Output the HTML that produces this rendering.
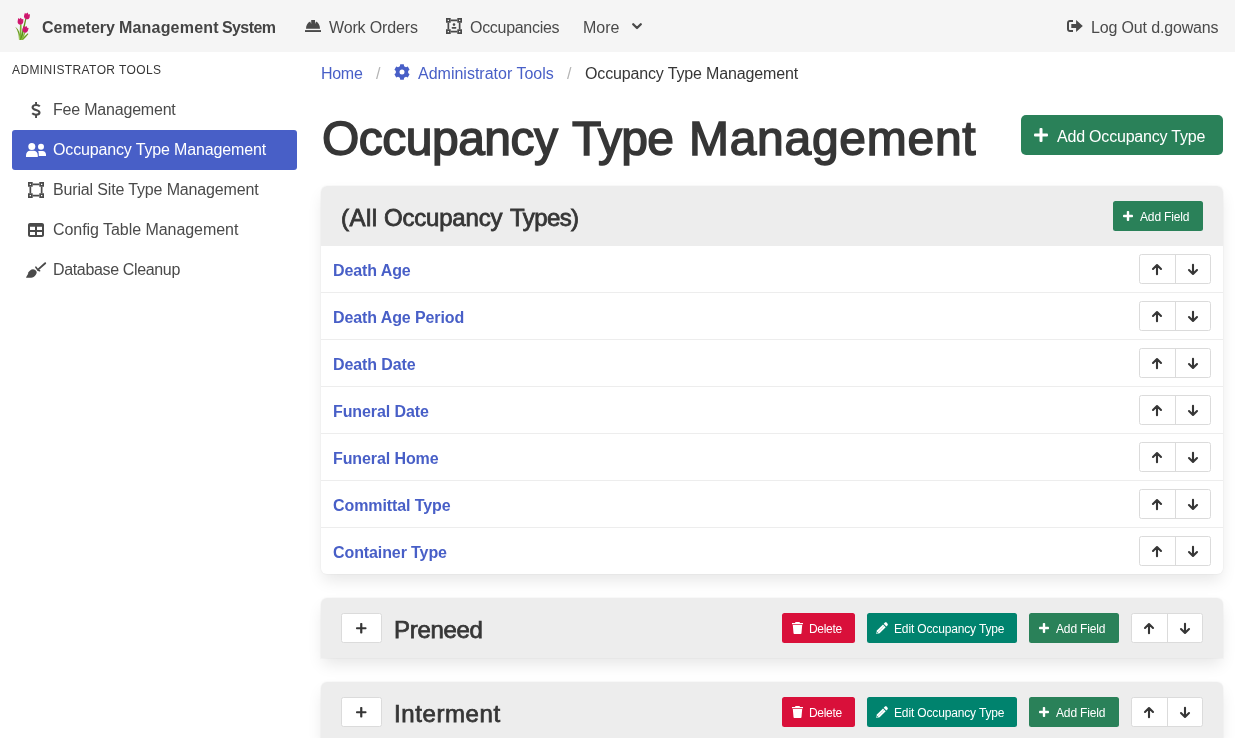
<!DOCTYPE html>
<html><head><meta charset="utf-8">
<style>
*{box-sizing:border-box;margin:0;padding:0}
html,body{width:1235px;height:738px;overflow:hidden;background:#fff}
body{position:relative;font-family:"Liberation Sans",sans-serif;color:#4a4a4a;font-size:16px}
.a{position:absolute;white-space:nowrap;line-height:1;will-change:transform}
svg{position:absolute;display:block;overflow:visible}
#nav{position:absolute;left:0;top:0;width:1235px;height:52px;background:#f5f5f5}
.nt{color:#4a4a4a;font-size:16px}
.ml{font-size:12px;letter-spacing:0.4px;color:#363636}
.mi{font-size:16px;color:#4a4a4a}
.active{position:absolute;left:12px;top:130px;width:285px;height:40px;background:#485fc7;border-radius:3px}
.link{color:#485fc7}
.panel{position:absolute;left:321px;width:902px;border-radius:6px;background:#fff;
 box-shadow:0 0.5em 1em -0.125em rgba(10,10,10,.1),0 0 0 1px rgba(10,10,10,.02)}
.ph{position:absolute;left:0;top:0;width:902px;height:60px;background:#ededed;border-radius:6px 6px 0 0}
.row{position:absolute;left:0;width:902px;height:47px;border-bottom:1px solid #ededed}
.rt{font-weight:700;color:#485fc7;font-size:16px}
.btn{position:absolute;border-radius:2.5px}
.green{background:#2a8159}
.grp{position:absolute;width:72px;height:30px;border:1px solid #dbdbdb;border-radius:2.5px;background:#fff}
.grp:after{content:"";position:absolute;left:35px;top:0;width:1px;height:28px;background:#dbdbdb}
.wt{color:#fff}
.sb{-webkit-text-stroke:0.6px currentColor}
</style></head>
<body>
<div id="nav"></div>

<svg style="left:15px;top:12px" width="16" height="28" viewBox="0 0 16 28">
<path d="M0.2 14.8C1.8 17 3 20 3.6 23L4 28H6L4.8 22C4 18.5 2.2 16 0.2 14.8Z" fill="#6a9c1e"/>
<path d="M4.4 28L5 12.5H6.6L6.4 28Z" fill="#7bb02e"/>
<path d="M5 28L10.3 6.5L11.4 6.8L7 28Z" fill="#5d9218"/>
<path d="M6 28C7.6 26 10.3 23.6 12.8 21.3L13.4 22C11.6 24.2 9.8 26.3 8 28Z" fill="#6a9c1e"/>
<path d="M5.6 28L9.6 19.8L10.6 20.3L7.6 28Z" fill="#84b83a"/>
<path d="M3.6 20.5C4.2 23 4.8 25.5 5.2 28H4.4C4.2 25.5 3.8 23 3.6 20.5Z" fill="#b4d97a"/>
<g fill="#d0186f">
<path d="M9 1.4L10.3 2.2 11.6 0.4 12.8 2 14.3 1.3 14.9 4.5C14.9 6.4 13.4 7.4 11.8 7.2 10.2 7 9 5.7 9 4Z" transform="rotate(18 11.8 4)"/>
<path d="M2.8 6.4L4.1 7.2 5.4 5.8 6.6 7.2 8 6.6 8.4 9.7C8.4 11.6 6.9 12.8 5.5 12.7 3.8 12.6 2.6 11.2 2.7 9.6Z" transform="rotate(8 5.5 9)"/>
<path d="M7.6 14.6L9 15.4 10.3 13.8 11.6 15.3 13 14.8 13.4 17.8C13.4 19.7 12 20.9 10.5 20.8 8.9 20.7 7.6 19.4 7.7 17.7Z" transform="rotate(22 10.5 17)"/>
</g>
<g fill="#a50c50" opacity="0.45"><path d="M11 3.5L12 6.5" stroke="#a50c50" stroke-width="0.6"/><path d="M5 8.5L5.6 11.5" stroke="#a50c50" stroke-width="0.6"/><path d="M10 16.5L10.8 19.5" stroke="#a50c50" stroke-width="0.6"/></g>
</svg>
<div class="a" style="left:41.6px;top:20px;font-weight:700;color:#444;font-size:16px;">Cemetery</div>
<div class="a" style="left:118.5px;top:20px;font-weight:700;color:#444;font-size:16px;letter-spacing:0.19px">Management</div>
<div class="a" style="left:222.2px;top:20px;font-weight:700;color:#444;font-size:16px;letter-spacing:-0.6px">System</div>
<svg style="left:305px;top:20px" width="16" height="12" viewBox="0 0 16 12" fill="#4a4a4a"><path d="M1 8.8C1 5.2 2.7 2.6 5.2 1.5L6.2 3.9V0H10V3.9L11 1.5C13.4 2.6 15 5.2 15 8.8Z"/><rect x="0" y="10.1" width="16" height="1.9"/></svg>
<div class="a nt" style="left:329px;top:20px;letter-spacing:-0.15px">Work Orders</div>
<svg style="left:446px;top:18px" width="16" height="16" viewBox="0 0 16 16" fill="#4a4a4a"><path fill-rule="evenodd" d="M0 0h4.7v4.7h-4.7z M1.7 1.7v1.3h1.3v-1.3z M11.3 0h4.7v4.7h-4.7z M13.0 1.7v1.3h1.3v-1.3z M0 11.3h4.7v4.7h-4.7z M1.7 13.0v1.3h1.3v-1.3z M11.3 11.3h4.7v4.7h-4.7z M13.0 13.0v1.3h1.3v-1.3z "/><path d="M4.7 1.5h6.6v1.7h-6.6z M4.7 12.8h6.6v1.7h-6.6z M1.5 4.7h1.7v6.6h-1.7z M12.8 4.7h1.7v6.6h-1.7z"/><circle cx="8" cy="6.6" r="1.3"/><rect x="5.6" y="8.9" width="4.8" height="1.8" rx="0.8"/></svg>
<div class="a nt" style="left:470px;top:20px;letter-spacing:-0.3px">Occupancies</div>
<div class="a nt" style="left:583.2px;top:20px">More</div>
<svg style="left:632px;top:22.5px" width="10" height="7" viewBox="0 0 10 7" fill="none" stroke="#4a4a4a" stroke-width="2.3" stroke-linecap="round" stroke-linejoin="round"><path d="M1.2 1.2L5 5 8.8 1.2"/></svg>
<svg style="left:1067px;top:20px" width="16" height="12" viewBox="0 0 16 12" fill="#4a4a4a"><path d="M6 0H3C1.3 0 0 1.3 0 3V9C0 10.7 1.3 12 3 12H6V10H3C2.4 10 2 9.6 2 9V3C2 2.4 2.4 2 3 2H6Z"/><path d="M4.3 3.9H9.1V0L15.8 6L9.1 12V7.9H4.3Z"/></svg>
<div class="a nt" style="left:1091px;top:20px;letter-spacing:-0.15px">Log Out d.gowans</div>
<div class="a ml" style="left:12px;top:64px">ADMINISTRATOR TOOLS</div>
<div class="active"></div>
<svg style="left:31px;top:102px" width="10" height="16" viewBox="0 0 10 16"><rect x="4.1" y="0" width="1.9" height="3" fill="#4a4a4a"/><rect x="4.1" y="13" width="1.9" height="3" fill="#4a4a4a"/><path d="M8.8 4.4C8 3.5 6.8 3.05 5.2 3.05 3.2 3.05 1.6 4 1.6 5.5 1.6 8.6 8.5 7.5 8.5 10.5 8.5 11.9 7 12.7 5 12.7 3.5 12.7 2.2 12.2 1.2 11.3" fill="none" stroke="#4a4a4a" stroke-width="2.1"/></svg>
<div class="a mi" style="left:53px;top:102px;letter-spacing:-0.2px">Fee Management</div>
<svg style="left:26px;top:143px" width="20" height="14" viewBox="0 0 20 14" fill="#fff"><circle cx="5.8" cy="3.5" r="3.5"/><path d="M0 12.5C0 9.8 1.8 7.8 4.2 7.8H7.6C10 7.8 11.8 9.8 11.8 12.5V14H0Z"/><circle cx="15" cy="3.8" r="3"/><path d="M12.2 8H16.6C18.5 8 20 9.6 20 11.6V13H12.8V12.5C12.8 10.6 12.7 9.2 12.2 8Z"/></svg>
<div class="a mi" style="left:53px;top:142px;color:#fff;letter-spacing:-0.15px">Occupancy Type Management</div>
<svg style="left:28px;top:182px" width="16" height="16" viewBox="0 0 16 16" fill="#4a4a4a"><path fill-rule="evenodd" d="M0 0h4.7v4.7h-4.7z M1.7 1.7v1.3h1.3v-1.3z M11.3 0h4.7v4.7h-4.7z M13.0 1.7v1.3h1.3v-1.3z M0 11.3h4.7v4.7h-4.7z M1.7 13.0v1.3h1.3v-1.3z M11.3 11.3h4.7v4.7h-4.7z M13.0 13.0v1.3h1.3v-1.3z "/><path d="M4.7 1.5h6.6v1.7h-6.6z M4.7 12.8h6.6v1.7h-6.6z M1.5 4.7h1.7v6.6h-1.7z M12.8 4.7h1.7v6.6h-1.7z"/></svg>
<div class="a mi" style="left:53px;top:182px;letter-spacing:-0.15px">Burial Site Type Management</div>
<svg style="left:28px;top:223px" width="16" height="14" viewBox="0 0 16 14" fill="#4a4a4a"><path fill-rule="evenodd" d="M2 0H14C15.1 0 16 .9 16 2V12C16 13.1 15.1 14 14 14H2C.9 14 0 13.1 0 12V2C0 .9.9 0 2 0ZM2 3.8V6.9H7V3.8ZM9 3.8V6.9H14V3.8ZM2 9V12H7V9ZM9 9V12H14V9Z"/></svg>
<div class="a mi" style="left:53px;top:222px;letter-spacing:-0.05px">Config Table Management</div>
<svg style="left:26px;top:262px" width="20" height="16" viewBox="0 0 20 16"><path d="M19.2 1.2L12 7.6" stroke="#4a4a4a" stroke-width="1.9" stroke-linecap="round"/><path d="M9.9 5.2L11.8 7.9 13.6 8.7" fill="none" stroke="#4a4a4a" stroke-width="1.6" stroke-linecap="round" stroke-linejoin="round"/><path d="M0 15.7C0.9 13.6 1.7 12.4 2.4 11.7L1.8 11.2C3 9.1 5 7.4 7 7.3 8.5 7.3 10 8.4 10.7 10 10.7 12 9.4 14 7.6 14.9 5.5 15.8 2.5 16 0 15.7Z" fill="#4a4a4a"/></svg>
<div class="a mi" style="left:53px;top:262px;letter-spacing:-0.35px">Database Cleanup</div>
<div class="a link" style="left:321px;top:66px;letter-spacing:-0.3px">Home</div>
<div class="a" style="left:376px;top:66px;color:#b5b5b5">/</div>
<svg style="left:394px;top:64px" width="16" height="16" viewBox="0 0 16 16" fill="#485fc7"><path fill-rule="evenodd" d="M4.90 2.63 L5.88 2.17 L6.22 0.30 L9.78 0.30 L10.12 2.17 L11.10 2.63 L11.99 3.25 L13.78 2.61 L15.55 5.69 L14.11 6.92 L14.20 8.00 L14.11 9.08 L15.55 10.31 L13.78 13.39 L11.99 12.75 L11.10 13.37 L10.12 13.83 L9.78 15.70 L6.22 15.70 L5.88 13.83 L4.90 13.37 L4.01 12.75 L2.22 13.39 L0.45 10.31 L1.89 9.08 L1.80 8.00 L1.89 6.92 L0.45 5.69 L2.22 2.61 L4.01 3.25Z M8 5.5A2.5 2.5 0 1 0 8 10.5 2.5 2.5 0 1 0 8 5.5Z"/></svg>
<div class="a link" style="left:418px;top:66px">Administrator Tools</div>
<div class="a" style="left:567px;top:66px;color:#b5b5b5">/</div>
<div class="a" style="left:585px;top:66px;color:#363636;letter-spacing:-0.15px">Occupancy Type Management</div>
<div class="a" style="left:321.6px;top:115px;font-size:48px;color:#363636;-webkit-text-stroke:1.5px #363636;letter-spacing:-0.52px">Occupancy</div>
<div class="a" style="left:572.4px;top:115px;font-size:48px;color:#363636;-webkit-text-stroke:1.5px #363636;letter-spacing:-0.67px">Type</div>
<div class="a" style="left:688.8px;top:115px;font-size:48px;color:#363636;-webkit-text-stroke:1.5px #363636;letter-spacing:0.72px">Management</div>
<div class="btn green" style="left:1021px;top:115px;width:202px;height:40px;border-radius:5px"></div>
<svg style="left:1034px;top:128px" width="14" height="14" viewBox="0 0 14 14" fill="#fff"><rect x="5.50" y="0" width="3.00" height="14" rx="1.00"/><rect x="0" y="5.50" width="14" height="3.00" rx="1.00"/></svg>
<div class="a wt" style="left:1057px;top:129px;letter-spacing:-0.2px">Add Occupancy Type</div>
<div class="panel" style="top:186px;height:388px">
<div class="ph"></div>
<div class="row" style="top:60px;"></div>
<div class="row" style="top:107px;"></div>
<div class="row" style="top:154px;"></div>
<div class="row" style="top:201px;"></div>
<div class="row" style="top:248px;"></div>
<div class="row" style="top:295px;"></div>
<div class="row" style="top:342px;border-bottom:none"></div>
</div>
<div class="a" style="left:341px;top:206px;font-size:24px;color:#363636;-webkit-text-stroke:0.8px #363636;letter-spacing:0.5px">(All</div>
<div class="a" style="left:383.8px;top:206px;font-size:24px;color:#363636;-webkit-text-stroke:0.8px #363636;letter-spacing:-0.2px">Occupancy</div>
<div class="a" style="left:510.3px;top:206px;font-size:24px;color:#363636;-webkit-text-stroke:0.8px #363636;letter-spacing:-0.6px">Types)</div>
<div class="btn green" style="left:1113px;top:201px;width:90px;height:30px"></div>
<svg style="left:1123px;top:211px" width="10" height="10" viewBox="0 0 10 10" fill="#fff"><rect x="3.80" y="0" width="2.40" height="10" rx="0.80"/><rect x="0" y="3.80" width="10" height="2.40" rx="0.80"/></svg>
<div class="a wt" style="left:1140px;top:211px;font-size:12px;letter-spacing:-0.15px">Add Field</div>
<div class="a rt" style="left:333px;top:263px;letter-spacing:-0.1px">Death Age</div>
<div class="grp" style="left:1139px;top:254px"></div><svg style="left:1152px;top:263.5px" width="10" height="11" viewBox="0 0 10 11" fill="none" stroke="#363636" stroke-width="2.1" stroke-linecap="round" stroke-linejoin="round"><path d="M5 10.2V1.2M1 5l4-4 4 4"/></svg><svg style="left:1188px;top:263.5px" width="10" height="11" viewBox="0 0 10 11" fill="none" stroke="#363636" stroke-width="2.1" stroke-linecap="round" stroke-linejoin="round"><path d="M5 0.8V9.8M1 6l4 4 4-4"/></svg>
<div class="a rt" style="left:333px;top:310px;letter-spacing:-0.1px">Death Age Period</div>
<div class="grp" style="left:1139px;top:301px"></div><svg style="left:1152px;top:310.5px" width="10" height="11" viewBox="0 0 10 11" fill="none" stroke="#363636" stroke-width="2.1" stroke-linecap="round" stroke-linejoin="round"><path d="M5 10.2V1.2M1 5l4-4 4 4"/></svg><svg style="left:1188px;top:310.5px" width="10" height="11" viewBox="0 0 10 11" fill="none" stroke="#363636" stroke-width="2.1" stroke-linecap="round" stroke-linejoin="round"><path d="M5 0.8V9.8M1 6l4 4 4-4"/></svg>
<div class="a rt" style="left:333px;top:357px;letter-spacing:-0.1px">Death Date</div>
<div class="grp" style="left:1139px;top:348px"></div><svg style="left:1152px;top:357.5px" width="10" height="11" viewBox="0 0 10 11" fill="none" stroke="#363636" stroke-width="2.1" stroke-linecap="round" stroke-linejoin="round"><path d="M5 10.2V1.2M1 5l4-4 4 4"/></svg><svg style="left:1188px;top:357.5px" width="10" height="11" viewBox="0 0 10 11" fill="none" stroke="#363636" stroke-width="2.1" stroke-linecap="round" stroke-linejoin="round"><path d="M5 0.8V9.8M1 6l4 4 4-4"/></svg>
<div class="a rt" style="left:333px;top:404px;letter-spacing:-0.1px">Funeral Date</div>
<div class="grp" style="left:1139px;top:395px"></div><svg style="left:1152px;top:404.5px" width="10" height="11" viewBox="0 0 10 11" fill="none" stroke="#363636" stroke-width="2.1" stroke-linecap="round" stroke-linejoin="round"><path d="M5 10.2V1.2M1 5l4-4 4 4"/></svg><svg style="left:1188px;top:404.5px" width="10" height="11" viewBox="0 0 10 11" fill="none" stroke="#363636" stroke-width="2.1" stroke-linecap="round" stroke-linejoin="round"><path d="M5 0.8V9.8M1 6l4 4 4-4"/></svg>
<div class="a rt" style="left:333px;top:451px;letter-spacing:-0.1px">Funeral Home</div>
<div class="grp" style="left:1139px;top:442px"></div><svg style="left:1152px;top:451.5px" width="10" height="11" viewBox="0 0 10 11" fill="none" stroke="#363636" stroke-width="2.1" stroke-linecap="round" stroke-linejoin="round"><path d="M5 10.2V1.2M1 5l4-4 4 4"/></svg><svg style="left:1188px;top:451.5px" width="10" height="11" viewBox="0 0 10 11" fill="none" stroke="#363636" stroke-width="2.1" stroke-linecap="round" stroke-linejoin="round"><path d="M5 0.8V9.8M1 6l4 4 4-4"/></svg>
<div class="a rt" style="left:333px;top:498px;letter-spacing:-0.1px">Committal Type</div>
<div class="grp" style="left:1139px;top:489px"></div><svg style="left:1152px;top:498.5px" width="10" height="11" viewBox="0 0 10 11" fill="none" stroke="#363636" stroke-width="2.1" stroke-linecap="round" stroke-linejoin="round"><path d="M5 10.2V1.2M1 5l4-4 4 4"/></svg><svg style="left:1188px;top:498.5px" width="10" height="11" viewBox="0 0 10 11" fill="none" stroke="#363636" stroke-width="2.1" stroke-linecap="round" stroke-linejoin="round"><path d="M5 0.8V9.8M1 6l4 4 4-4"/></svg>
<div class="a rt" style="left:333px;top:545px;letter-spacing:-0.1px">Container Type</div>
<div class="grp" style="left:1139px;top:536px"></div><svg style="left:1152px;top:545.5px" width="10" height="11" viewBox="0 0 10 11" fill="none" stroke="#363636" stroke-width="2.1" stroke-linecap="round" stroke-linejoin="round"><path d="M5 10.2V1.2M1 5l4-4 4 4"/></svg><svg style="left:1188px;top:545.5px" width="10" height="11" viewBox="0 0 10 11" fill="none" stroke="#363636" stroke-width="2.1" stroke-linecap="round" stroke-linejoin="round"><path d="M5 0.8V9.8M1 6l4 4 4-4"/></svg>
<div class="panel" style="top:598px;height:60px;background:#ededed;border-radius:6px 6px 0 0"></div>
<div class="btn" style="left:341px;top:613px;width:41px;height:30px;background:#fff;border:1px solid #dbdbdb"></div>
<svg style="left:356.3px;top:622.5px" width="10.5" height="10.5" viewBox="0 0 10.5 10.5" fill="#363636"><rect x="4.15" y="0" width="2.20" height="10.5" rx="0.73"/><rect x="0" y="4.15" width="10.5" height="2.20" rx="0.73"/></svg>
<div class="a sb" style="left:394px;top:618px;font-size:24px;color:#363636;-webkit-text-stroke:0.75px #363636;letter-spacing:-0.3px">Preneed</div>
<div class="btn" style="left:782px;top:613px;width:73px;height:30px;background:#d9103a"></div>
<svg style="left:792px;top:622px" width="11" height="12" viewBox="0 0 11 12" fill="#fff"><path d="M3.5 0H7.5L8 1H11V2.3H0V1H3Z"/><path d="M0.8 3H10.2L9.5 11C9.45 11.6 9 12 8.4 12H2.6C2 12 1.55 11.6 1.5 11Z"/></svg>
<div class="a wt" style="left:809px;top:623px;font-size:12px;letter-spacing:-0.3px">Delete</div>
<div class="btn" style="left:867px;top:613px;width:150px;height:30px;background:#00836e"></div>
<svg style="left:876px;top:622px" width="13" height="12" viewBox="0 0 13 12" fill="#fff"><path d="M8.7 0.8C9.3 0.2 10.2 0.2 10.8 0.8L11.4 1.4C12 2 12 2.9 11.4 3.5L10.4 4.5 7.7 1.8Z"/><path d="M7 2.5L9.7 5.2 3.6 11.3 0.2 12 0.9 8.6Z"/><path d="M2.6 9.6L8 4.2" stroke="#00836e" stroke-width="0.55" stroke-dasharray="0.7 0.7"/><path d="M0.7 11.5L1.1 9.9 2.3 11.1Z" fill="#00836e"/></svg>
<div class="a wt" style="left:894px;top:623px;font-size:12px;letter-spacing:-0.15px">Edit Occupancy Type</div>
<div class="btn green" style="left:1029px;top:613px;width:90px;height:30px"></div>
<svg style="left:1039px;top:623px" width="10" height="10" viewBox="0 0 10 10" fill="#fff"><rect x="3.80" y="0" width="2.40" height="10" rx="0.80"/><rect x="0" y="3.80" width="10" height="2.40" rx="0.80"/></svg>
<div class="a wt" style="left:1056px;top:623px;font-size:12px;letter-spacing:-0.15px">Add Field</div>
<div class="grp" style="left:1131px;top:613px"></div><svg style="left:1144px;top:622.5px" width="10" height="11" viewBox="0 0 10 11" fill="none" stroke="#363636" stroke-width="2.1" stroke-linecap="round" stroke-linejoin="round"><path d="M5 10.2V1.2M1 5l4-4 4 4"/></svg><svg style="left:1180px;top:622.5px" width="10" height="11" viewBox="0 0 10 11" fill="none" stroke="#363636" stroke-width="2.1" stroke-linecap="round" stroke-linejoin="round"><path d="M5 0.8V9.8M1 6l4 4 4-4"/></svg>
<div class="panel" style="top:682px;height:60px;background:#ededed;border-radius:6px 6px 0 0"></div>
<div class="btn" style="left:341px;top:697px;width:41px;height:30px;background:#fff;border:1px solid #dbdbdb"></div>
<svg style="left:356.3px;top:706.5px" width="10.5" height="10.5" viewBox="0 0 10.5 10.5" fill="#363636"><rect x="4.15" y="0" width="2.20" height="10.5" rx="0.73"/><rect x="0" y="4.15" width="10.5" height="2.20" rx="0.73"/></svg>
<div class="a sb" style="left:394px;top:702px;font-size:24px;color:#363636;-webkit-text-stroke:0.75px #363636;letter-spacing:0.6px">Interment</div>
<div class="btn" style="left:782px;top:697px;width:73px;height:30px;background:#d9103a"></div>
<svg style="left:792px;top:706px" width="11" height="12" viewBox="0 0 11 12" fill="#fff"><path d="M3.5 0H7.5L8 1H11V2.3H0V1H3Z"/><path d="M0.8 3H10.2L9.5 11C9.45 11.6 9 12 8.4 12H2.6C2 12 1.55 11.6 1.5 11Z"/></svg>
<div class="a wt" style="left:809px;top:707px;font-size:12px;letter-spacing:-0.3px">Delete</div>
<div class="btn" style="left:867px;top:697px;width:150px;height:30px;background:#00836e"></div>
<svg style="left:876px;top:706px" width="13" height="12" viewBox="0 0 13 12" fill="#fff"><path d="M8.7 0.8C9.3 0.2 10.2 0.2 10.8 0.8L11.4 1.4C12 2 12 2.9 11.4 3.5L10.4 4.5 7.7 1.8Z"/><path d="M7 2.5L9.7 5.2 3.6 11.3 0.2 12 0.9 8.6Z"/><path d="M2.6 9.6L8 4.2" stroke="#00836e" stroke-width="0.55" stroke-dasharray="0.7 0.7"/><path d="M0.7 11.5L1.1 9.9 2.3 11.1Z" fill="#00836e"/></svg>
<div class="a wt" style="left:894px;top:707px;font-size:12px;letter-spacing:-0.15px">Edit Occupancy Type</div>
<div class="btn green" style="left:1029px;top:697px;width:90px;height:30px"></div>
<svg style="left:1039px;top:707px" width="10" height="10" viewBox="0 0 10 10" fill="#fff"><rect x="3.80" y="0" width="2.40" height="10" rx="0.80"/><rect x="0" y="3.80" width="10" height="2.40" rx="0.80"/></svg>
<div class="a wt" style="left:1056px;top:707px;font-size:12px;letter-spacing:-0.15px">Add Field</div>
<div class="grp" style="left:1131px;top:697px"></div><svg style="left:1144px;top:706.5px" width="10" height="11" viewBox="0 0 10 11" fill="none" stroke="#363636" stroke-width="2.1" stroke-linecap="round" stroke-linejoin="round"><path d="M5 10.2V1.2M1 5l4-4 4 4"/></svg><svg style="left:1180px;top:706.5px" width="10" height="11" viewBox="0 0 10 11" fill="none" stroke="#363636" stroke-width="2.1" stroke-linecap="round" stroke-linejoin="round"><path d="M5 0.8V9.8M1 6l4 4 4-4"/></svg>
</body></html>
